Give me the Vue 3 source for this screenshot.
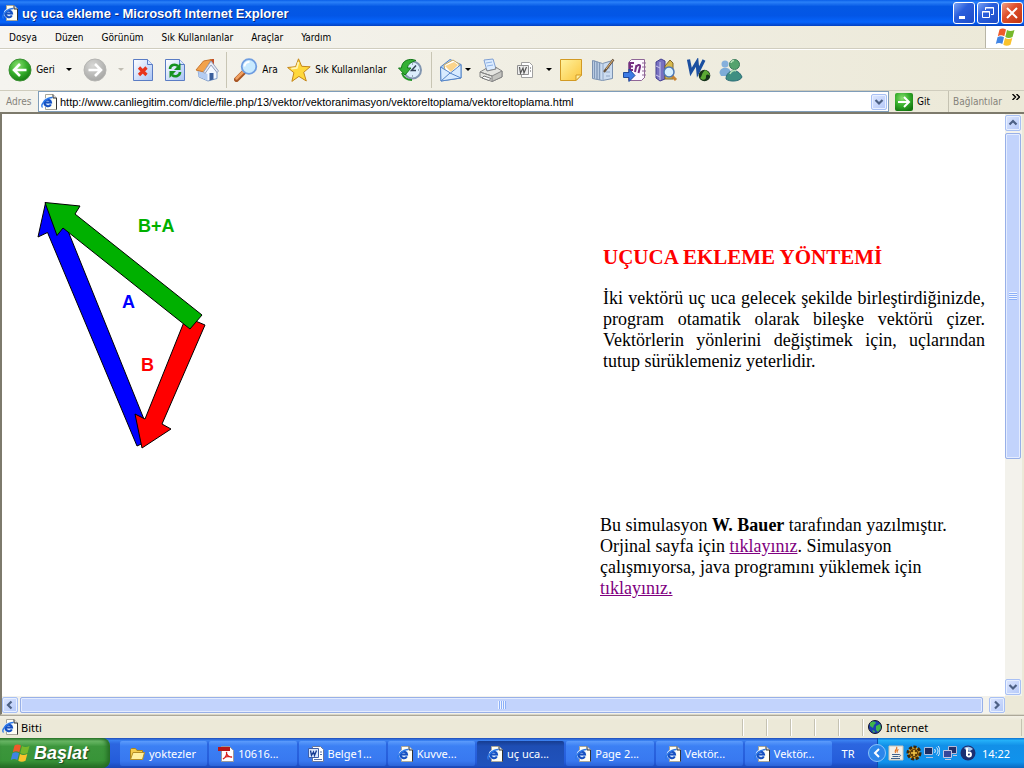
<template>
  <div class="screen">
    <!-- shared gradients and icons that are used more than once -->
    <svg class="defs" aria-hidden="true">
      <defs>
        <linearGradient id="sheet" x1="0" y1="0" x2="1" y2="1">
          <stop offset="0" stop-color="#fff" />
          <stop offset="1" stop-color="#a9c4f5" />
        </linearGradient>
        <radialGradient id="green" cx=".4" cy=".3" r=".75">
          <stop offset="0" stop-color="#8be070" />
          <stop offset=".55" stop-color="#35ad2b" />
          <stop offset="1" stop-color="#13780f" />
        </radialGradient>
        <radialGradient id="gray" cx=".4" cy=".3" r=".75">
          <stop offset="0" stop-color="#d8d8d6" />
          <stop offset="1" stop-color="#a4a4a2" />
        </radialGradient>
        <linearGradient id="note" x1="0" y1="0" x2="1" y2="1">
          <stop offset="0" stop-color="#fff3a0" />
          <stop offset="1" stop-color="#fbc53c" />
        </linearGradient>
        <symbol id="ie" viewBox="0 0 16 16">
          <path d="M4.500 .5h7.500l3.500 3.500v11.500h-11z" fill="#fffef4" stroke="#a8a69a" />
          <path d="M15.500 4v11.500M12 .5v3.500h3.500" fill="#ddd" stroke="#333" />
          <circle cx="6.500" cy="8.500" r="4.800" fill="#cfe4ff" />
          <path d="M10 8.500H3.500a3.300 3.300 0 0 1 6.500 0zM9.800 10.500a3.400 3.400 0 0 1-6.300-2" fill="none" stroke="#1650c0" stroke-width="2" />
          <path d="M1.500 13.500C-1 11 5 3.500 11.500 3.500" fill="none" stroke="#2c78e8" stroke-width="1.300" />
        </symbol>
        <symbol id="flag" viewBox="0 0 20 18">
          <path d="M4.500 1.500c2-1.500 4.200-1.500 6.500 0L9.300 8.300c-2-1.300-4.500-1.300-6.500 0z" fill="#ee5a2a" />
          <path d="M12 2c2.200 1.300 4.500 1.300 7.500 0L17.500 9c-2.500 1.300-5 1.300-7.200 0z" fill="#76b82c" />
          <path d="M2.500 9.300c2-1.300 4.200-1.300 6.500 0L7.300 16c-2-1.400-4.500-1.400-6.500 0z" fill="#3f84e4" />
          <path d="M10 10c2.200 1.300 4.700 1.300 7.300 0L15.500 16.700c-2.500 1.300-5 1.300-7.200 0z" fill="#f9c22c" />
        </symbol>
      </defs>
    </svg>

    <header class="title-bar">
      <svg class="icon16"><use href="#ie" /></svg>
      <h1>uç uca ekleme - Microsoft Internet Explorer</h1>
      <button class="caption" aria-label="Simge durumuna küçült">
        <svg viewBox="0 0 20 20"><path d="M5 14.500h6" stroke="#fff" stroke-width="3" /></svg>
      </button>
      <button class="caption" aria-label="Önceki boyut">
        <svg viewBox="0 0 20 20" fill="none" stroke="#fff">
          <path d="M7.500 7V4.500h8v7H13M7 5h9M4.500 8.500h7v6h-7zM4 9h8" />
        </svg>
      </button>
      <button class="caption close" aria-label="Kapat">
        <svg viewBox="0 0 20 20"><path d="M5 5l10 10M15 5L5 15" stroke="#fff" stroke-width="2" /></svg>
      </button>
    </header>

    <nav class="menu-bar">
      <button v-for="item in menus" :key="item">{{ item }}</button>
      <span class="brand"><svg viewBox="0 0 20 18"><use href="#flag" /></svg></span>
    </nav>

    <div class="tool-bar">
      <button class="tool back">
        <svg class="icon24" viewBox="0 0 24 24">
          <circle cx="12" cy="12" r="11" fill="url(#green)" stroke="#3c8f34" />
          <path d="M18.500 12H7M12 6l-6 6 6 6" fill="none" stroke="#fff" stroke-width="2.600" />
        </svg>
        Geri
      </button>
      <button class="drop" aria-label="Geri listesi"><i class="caret"></i></button>
      <button class="tool forward" aria-label="İleri" disabled>
        <svg class="icon24" viewBox="0 0 24 24">
          <circle cx="12" cy="12" r="11" fill="url(#gray)" stroke="#b5b5b2" />
          <path d="M5.500 12H17M12 6l6 6-6 6" fill="none" stroke="#fff" stroke-width="2.600" />
        </svg>
      </button>
      <button class="drop" aria-label="İleri listesi" disabled><i class="caret"></i></button>
      <button class="tool" aria-label="Durdur">
        <svg class="icon24" viewBox="0 0 24 24">
          <path d="M2.500 1.500h14l5 5v16h-19z" fill="url(#sheet)" stroke="#5a7cc4" />
          <path d="M16.500 1.500v5h5" fill="#dbe7ff" stroke="#5a7cc4" />
          <path d="M8 9.500l7.500 7.500M15.500 9.500L8 17" stroke="#e8341c" stroke-width="3.200" />
        </svg>
      </button>
      <button class="tool" aria-label="Yenile">
        <svg class="icon24" viewBox="0 0 24 24">
          <path d="M2.500 1.500h14l5 5v16h-19z" fill="url(#sheet)" stroke="#5a7cc4" />
          <path d="M16.500 1.500v5h5" fill="#dbe7ff" stroke="#5a7cc4" />
          <path d="M7 11c0-4 5-5.500 8-3" fill="none" stroke="#15921f" stroke-width="2.600" />
          <path d="M17.500 5v7h-6.500z" fill="#15921f" />
          <path d="M17 14c0 4-5 5.500-8 3" fill="none" stroke="#15921f" stroke-width="2.600" />
          <path d="M6.500 20v-7h6.500z" fill="#15921f" />
        </svg>
      </button>
      <button class="tool" aria-label="Giriş">
        <svg class="icon24" viewBox="0 0 24 24">
          <path d="M3 12l12-7 7 9v6.500l-9 2.500-9-4z" fill="#f4f8ff" stroke="#7d9bc9" />
          <path d="M3.500 12l9 4v6.500l-9-4z" fill="#b4ccf2" />
          <path d="M15 1h4v6h-4z" fill="#c4502c" />
          <path d="M1 12L8.500 3l8-1.500L9 14z" fill="#f2a24c" stroke="#c9762e" />
          <path d="M16 3L23.500 13l-1.500 1.500L16 7 10 15.500 8.500 14z" fill="#e8ebf4" stroke="#94a2c0" />
          <path d="M14.500 15h4v6.500l-4 1z" fill="#3b5f9c" />
        </svg>
      </button>
      <i class="rule"></i>
      <button class="tool search">
        <svg class="icon24" viewBox="0 0 24 24">
          <path d="M10 14L2.500 21.500" stroke="#a85624" stroke-width="5" stroke-linecap="round" />
          <path d="M9.500 13.500L2.500 20.500" stroke="#f0a060" stroke-width="2.500" stroke-linecap="round" />
          <circle cx="15" cy="8.500" r="7.300" fill="#c8eaff" stroke="#6f9de0" stroke-width="1.800" />
          <path d="M10.500 8.500a4.500 4.500 0 0 1 5-4.500" fill="none" stroke="#fff" stroke-width="2" />
        </svg>
        Ara
      </button>
      <button class="tool favorites">
        <svg class="icon24" viewBox="0 0 24 24">
          <path d="M11.500 .8l3.200 7.500 8.500.5-6.500 5.500 2.600 8.700-7.400-4.600-7 5 2-8.700L.6 9.500l8-.8z" fill="#ffd83c" stroke="#c4861c" />
          <path d="M11.500 4l-1.700 6-5.500.7" fill="none" stroke="#fff6b8" stroke-width="1.800" />
        </svg>
        Sık Kullanılanlar
      </button>
      <button class="tool history" aria-label="Geçmiş">
        <svg class="icon24" viewBox="0 0 24 24">
          <circle cx="14.500" cy="12" r="8.500" fill="#dceefc" stroke="#8296b0" stroke-width="2" />
          <path d="M14.500 5.500v1M21 12h-1M14.500 18.500v-1" stroke="#567" />
          <path d="M18 7.500L13.500 12.500H18" fill="none" stroke="#345" stroke-width="1.500" />
          <path d="M18 2.500C11-.5 3.500 3 3.500 10H.5l6.500 7 6-7H9.500c0-3.500 3.500-6 8.500-7.500z" fill="#35b035" stroke="#14781a" />
          <path d="M4 15c1.500 4.500 5.500 7 10 7" fill="none" stroke="#239428" stroke-width="2" />
        </svg>
      </button>
      <i class="rule"></i>
      <button class="tool mail" aria-label="Posta">
        <svg class="icon24" viewBox="0 0 24 24">
          <path d="M1.500 9L11 1.500l11 5V20l-20 3z" fill="#a9cdf8" stroke="#5585c8" />
          <path d="M5 7l9-5 6 4v9l-13 2z" fill="#fff" stroke="#c9a85c" />
          <path d="M6 8l9-4 4 3-7 7z" fill="#fbd48c" />
          <path d="M1.500 9l10 6L22 6.500V20l-20 3z" fill="#d8ebff" stroke="#5585c8" />
          <path d="M2 23l9-8 11 5" fill="none" stroke="#5585c8" />
        </svg>
        <i class="caret"></i>
      </button>
      <button class="tool print" aria-label="Yazdır">
        <svg class="icon24" viewBox="0 0 24 24">
          <path d="M5 2l9-1 3 10-9 2z" fill="#dcecff" stroke="#7fa0d4" />
          <path d="M7 5l6-1M8 8l6-1" stroke="#8fb2e4" />
          <path d="M1 14l6-3.500 1 2.500 9-2-.5-2L23 13v6l-10 4.500L1 19z" fill="#e4e4e0" stroke="#858585" />
          <path d="M1 14l12 4 10-5v6l-10 4.500V18z" fill="#c4c4c0" stroke="#858585" />
          <path d="M5 18l7 2.500-2 2L3 20z" fill="#fff" stroke="#777" />
        </svg>
      </button>
      <button class="tool word" aria-label="Word ile düzenle">
        <svg class="icon16" viewBox="0 0 16 16">
          <path d="M4.500 .5h8l3 3v12h-11z" fill="#fff" stroke="#a0a0a0" />
          <path d="M.5 3.500h11v9H.5z" fill="#eee" stroke="#909090" />
          <path d="M2.500 5l1 6L6 6l1 5 2.500-6M13 6h1M13 9h1" fill="none" stroke="#555" stroke-width="1.200" />
        </svg>
      </button>
      <button class="drop" aria-label="Düzenleyiciler"><i class="caret"></i></button>
      <button class="tool" aria-label="Not">
        <svg class="icon24" viewBox="0 0 24 24">
          <path d="M1.500 1.500h21V17L17 22.500H1.500z" fill="url(#note)" stroke="#d29a24" />
          <path d="M22.500 17H17v5.500z" fill="#fff1a4" stroke="#d29a24" />
        </svg>
      </button>
      <button class="tool" aria-label="Günlük">
        <svg class="icon24" viewBox="0 0 24 24">
          <path d="M1.500 2.500l10 3 10-3v18l-10 2-10-2z" fill="#cbdcf0" stroke="#7c92b0" />
          <path d="M3.500 2.500v18M6 3.500v18M8.500 4.500v17.500" stroke="#8199b9" stroke-width="1.500" />
          <path d="M12 6v16M15 10h4M15 14h4M15 18h4" stroke="#91a7c6" />
          <path d="M13 14L22.500 1.500" stroke="#66513a" stroke-width="2.200" />
          <path d="M15 11L22 2" stroke="#e2b878" />
        </svg>
      </button>
      <button class="tool" aria-label="OneNote">
        <svg class="icon24" viewBox="0 0 24 24">
          <path d="M5.500 4.500l3-3h13v18l-3 3h-13z" fill="#fdf8ff" stroke="#8f6697" />
          <path d="M21.500 2v18M19 5h4M19 9h4M19 13h4M19 17h4" stroke="#8f6697" />
          <path d="M11 5H7v7h3M7 8.500h3M12 14l1.500-7M12.700 10c1-3 5-4.500 4.300-1l-1.500 6" fill="none" stroke="#762d82" stroke-width="2" />
          <path d="M.5 14.500H6V11l6 6.500-6 6V19.500H.5z" fill="#3d7be4" stroke="#1d4a9c" />
        </svg>
      </button>
      <button class="tool" aria-label="Araştır">
        <svg class="icon24" viewBox="0 0 24 24">
          <path d="M1 4l5-3 4 2v18l-5 2-4-3z" fill="#7770c0" stroke="#443f91" />
          <path d="M5 4v18M1 8l4 2M1 17l4 2" stroke="#cac7ee" />
          <path d="M10 8l5-6 3 3v16h-8z" fill="#d8b94c" stroke="#80662a" />
          <path d="M16 17l5 5" stroke="#c78434" stroke-width="3" />
          <circle cx="14" cy="14" r="5" fill="#d7f0ff" stroke="#4e78b6" stroke-width="1.500" />
        </svg>
      </button>
      <button class="tool" aria-label="Web sözlük">
        <svg class="icon24" viewBox="0 0 24 24">
          <path d="M1.500 1.500L4 14l6-10 1 10 6-12" fill="none" stroke="#1b4fa0" stroke-width="3.200" />
          <circle cx="17.500" cy="17.500" r="5.800" fill="#16331a" />
          <path d="M13 20c2-1 1-4 5-8 3 1 5 4 5 6-2-2-4-2-4 1s-3 4-6 1z" fill="#5ca934" />
        </svg>
      </button>
      <button class="tool" aria-label="Messenger">
        <svg class="icon24" viewBox="0 0 24 24">
          <circle cx="6" cy="6" r="3.500" fill="#86b0dc" />
          <path d="M.5 15c0-6 9-7 11-2v5H2z" fill="#7eacd8" />
          <circle cx="15.500" cy="6.500" r="5" fill="#55a36d" stroke="#39795a" />
          <path d="M7 21c0-9 12-12 16-2-2 5-13 5-16 2z" fill="#3e8f82" stroke="#2c6c78" />
          <path d="M12 5a3 3 0 0 1 3-2.500M11 16c1-3 4-4 6-3" fill="none" stroke="#b4e0b6" stroke-width="1.500" />
        </svg>
      </button>
    </div>

    <form class="address-bar" @submit.prevent>
      <label for="address">Adres</label>
      <div class="combo">
        <svg class="icon16"><use href="#ie" /></svg>
        <input id="address" v-model="address" type="text" spellcheck="false" />
        <button type="button" class="scroll-button" aria-label="Adres listesi">
          <svg viewBox="0 0 16 16"><path d="M4.500 6L8 9.500 11.500 6" /></svg>
        </button>
      </div>
      <button class="go" type="submit">
        <svg viewBox="0 0 18 18">
          <path d="M0 0h18v18H0z" fill="url(#green)" />
          <path d="M3 9h10M9 4l5 5-5 5" fill="none" stroke="#fff" stroke-width="2" />
        </svg>
        Git
      </button>
      <span class="links">Bağlantılar</span>
      <button class="more" type="button" aria-label="Diğer bağlantılar">
        <svg viewBox="0 0 8 6"><path d="M.5 0l3 3-3 3M4.500 0l3 3-3 3" fill="none" stroke="#000" stroke-width="1.400" /></svg>
      </button>
    </form>

    <div class="view">
      <main class="page">
        <svg class="vectors" viewBox="20 190 220 270" role="img" aria-label="A, B ve B+A vektörleri">
          <g stroke="#000">
            <polygon points="45.500,203 38,237 47.500,232.500 137,446 152,439 66,226 76,222" fill="#00f" />
            <polygon points="142,448 135,414 145,419 186,317 205,325 162,424 171,429" fill="#f00" />
            <polygon points="45,202.500 80,206 75,214 202,315 190,329 63,228 57,235.500" fill="#00b000" />
          </g>
          <text x="138" y="232" fill="#00b000">B+A</text>
          <text x="122" y="308" fill="#00f">A</text>
          <text x="141" y="371" fill="#f00">B</text>
        </svg>
        <article>
          <section class="method">
            <h2>UÇUCA EKLEME YÖNTEMİ</h2>
            <p>
              İki vektörü uç uca gelecek şekilde birleştirdiğinizde, program otamatik olarak bileşke
              vektörü çizer. Vektörlerin yönlerini değiştimek için, uçlarından tutup sürüklemeniz
              yeterlidir.
            </p>
          </section>
          <p class="credit">
            Bu simulasyon <b>W. Bauer</b> tarafından yazılmıştır. Orjinal sayfa için
            <a href="#">tıklayınız</a>. Simulasyon çalışmıyorsa, java programını yüklemek için
            <a href="#">tıklayınız.</a>
          </p>
        </article>
      </main>
      <div class="scroll vertical">
        <button class="scroll-button" aria-label="Yukarı">
          <svg viewBox="0 0 16 16"><path d="M4.500 9.500L8 6l3.500 3.500" /></svg>
        </button>
        <div class="track"><div class="thumb"><i class="grip"></i></div></div>
        <button class="scroll-button" aria-label="Aşağı">
          <svg viewBox="0 0 16 16"><path d="M4.500 6L8 9.500 11.500 6" /></svg>
        </button>
      </div>
      <div class="scroll horizontal">
        <button class="scroll-button" aria-label="Sola">
          <svg viewBox="0 0 16 16"><path d="M9.500 4.500L6 8l3.500 3.500" /></svg>
        </button>
        <div class="track"><div class="thumb"><i class="grip"></i></div></div>
        <button class="scroll-button" aria-label="Sağa">
          <svg viewBox="0 0 16 16"><path d="M6 4.500L9.500 8 6 11.500" /></svg>
        </button>
      </div>
    </div>

    <div class="status-bar">
      <svg class="icon16"><use href="#ie" /></svg>
      <span class="message">Bitti</span>
      <i v-for="n in 5" :key="n" class="cell"></i>
      <span class="zone">
        <svg viewBox="0 0 14 14">
          <circle cx="7" cy="7" r="6.500" fill="#1b3fb0" stroke="#112" />
          <path d="M2 3c2-2 5-2 6 0L6 5 5 8 2 6zM8 6l4-2 1 4-3 4-2-2zM4 10l3 1-1 2z" fill="#3fb54a" />
        </svg>
        Internet
      </span>
    </div>

    <footer class="task-bar">
      <button class="start"><svg viewBox="0 0 20 18"><use href="#flag" /></svg>Başlat</button>
      <div class="tasks">
        <button v-for="(task, index) in tasks" :key="index" :class="{ active: task.active }">
          <svg v-if="task.icon === 'folder'" class="icon16" viewBox="0 0 16 16">
            <path d="M1.500 13.500v-10l1-1h4l1.500 2h5.500v9z" fill="#f3cb4c" stroke="#a9831d" />
            <path d="M1.500 13.500L4 6.500h11.500l-2 7z" fill="#fff0a0" stroke="#b48e26" />
          </svg>
          <svg v-else-if="task.icon === 'pdf'" class="icon16" viewBox="0 0 16 16">
            <path d="M3.500 .5h8l4 4v11h-12z" fill="#fff" stroke="#999" />
            <path d="M0 1h12v4H0z" fill="#b81818" />
            <path d="M5 13c3-2 4-5 3.500-7C8 9 11 11.500 14 11 11 10 7 11 5 13z" fill="none" stroke="#d8201c" stroke-width="1.300" />
          </svg>
          <svg v-else-if="task.icon === 'word'" class="icon16" viewBox="0 0 16 16">
            <path d="M4.500 .5h8l3 3v12h-11z" fill="#fff" stroke="#68789a" />
            <path d="M12 6h2M12 8.500h2M6 13.500h8" stroke="#5571ab" />
            <path d="M.5 2.500h10v9H.5z" fill="#d8e6ff" stroke="#3c5ea8" />
            <path d="M2.500 4.500l1 5L5.500 6l1 3.500 2-5" fill="none" stroke="#173c92" stroke-width="1.300" />
          </svg>
          <svg v-else class="icon16"><use href="#ie" /></svg>
          {{ task.title }}
        </button>
      </div>
      <span class="language">TR</span>
      <div class="tray">
        <button class="expand" aria-label="Gizli simgeleri göster">
          <svg viewBox="0 0 18 18">
            <circle cx="9" cy="9" r="8.500" fill="#2c86ea" stroke="#8cc4fa" />
            <path d="M11 5L7 9l4 4" fill="none" stroke="#fff" stroke-width="2" />
          </svg>
        </button>
        <svg class="icon16" viewBox="0 0 16 16">
          <path d="M1 1h14v14H1z" fill="#f2f0ea" stroke="#c9c4b6" />
          <path d="M8.500 2c2 2-3 3-1 6M10.500 4.500c-1.500 1-2 1.500-1 3" fill="none" stroke="#e0701c" stroke-width="1.200" />
          <path d="M4 9.500h7M4.500 11.500h6M3 13.500h9M11 9.500c2 0 2 2 0 2" fill="none" stroke="#3c618d" />
        </svg>
        <svg class="icon16" viewBox="0 0 16 16">
          <circle cx="8" cy="8" r="6" fill="#e8a828" stroke="#3b2808" stroke-width="3" stroke-dasharray="3 1.500" />
          <circle cx="8" cy="8" r="4" fill="#5c3c08" />
          <path d="M8 5v6M5 8h6" stroke="#f8c848" stroke-width="1.500" />
        </svg>
        <svg class="icon16" viewBox="0 0 16 16">
          <path d="M.5 2.500h8v7h-8zM2 12.500h7" fill="#1c2c60" stroke="#aebfdf" />
          <path d="M10.500 4c1 1 1 3 0 4M12.500 2.500c2 2 2 5 0 7M14 1c2.500 3 2.500 7 0 10" fill="none" stroke="#e8f2ff" />
        </svg>
        <svg class="icon16" viewBox="0 0 16 16">
          <path d="M6.500 1.500h8v7h-8z" fill="#22306a" stroke="#b3b9d7" />
          <path d="M1.500 5.500h8v7h-8zM3 14.500h6M11 10.500h4" fill="#35479a" stroke="#c2c7e2" />
        </svg>
        <svg class="icon16" viewBox="0 0 16 16">
          <circle cx="8" cy="8" r="7.500" fill="#1b2f72" />
          <path d="M4 3a7 7 0 0 1 9 1l-3 2-4-1z" fill="#a9c9ee" />
          <path d="M7 3v8M7 9a2 2 0 1 1 2 2.500A2 2 0 0 1 7 9" fill="none" stroke="#fff" stroke-width="2" />
        </svg>
        <time>14:22</time>
      </div>
    </footer>
  </div>
</template>

<script setup>
import { ref } from "vue";

const menus = ["Dosya", "Düzen", "Görünüm", "Sık Kullanılanlar", "Araçlar", "Yardım"];

const address = ref(
  "http://www.canliegitim.com/dicle/file.php/13/vektor/vektoranimasyon/vektoreltoplama/vektoreltoplama.html"
);

const tasks = ref([
  { title: "yoktezler", icon: "folder" },
  { title: "10616...", icon: "pdf" },
  { title: "Belge1...", icon: "word" },
  { title: "Kuvve...", icon: "ie" },
  { title: "uç uca...", icon: "ie", active: true },
  { title: "Page 2...", icon: "ie" },
  { title: "Vektör...", icon: "ie" },
  { title: "Vektör...", icon: "ie" },
]);
</script>

<style>
body {
  margin: 0;
}
</style>

<style scoped>
.screen {
  display: flex;
  flex-direction: column;
  height: 100vh;
  overflow: hidden;
  background: #ece9d8;
  color: #000;
  font-family: "Noto Sans", sans-serif;
  font-size: 11px;
}

.defs {
  position: absolute;
  width: 0;
  height: 0;
}

button {
  display: flex;
  align-items: center;
  padding: 0;
  border: 0;
  background: none;
  color: inherit;
  font: inherit;
  white-space: nowrap;
}

svg {
  display: block;
  flex: none;
}

.icon16 {
  width: 16px;
  height: 16px;
}

.icon24 {
  width: 24px;
  height: 24px;
}

/* ---- title bar ---- */
.title-bar {
  display: flex;
  flex: none;
  align-items: center;
  gap: 2px;
  height: 26px;
  padding: 0 1px 0 2px;
  background: linear-gradient(#0a5fe8, #2a80f8 8%, #0458e4 25%, #0356e6 60%, #0664fc 85%, #0340c0);
}

.title-bar h1 {
  flex: 1;
  margin: 0 0 0 2px;
  color: #fff;
  font-family: "Liberation Sans", sans-serif;
  font-size: 13px;
  font-weight: bold;
  text-shadow: 1px 1px #0a2a80;
}

.caption {
  box-sizing: border-box;
  width: 22px;
  height: 22px;
  border: 1px solid #fff;
  border-radius: 3px;
  background: linear-gradient(135deg, #7ba4f4, #2a5fdc 40%, #1d4cc8);
}

.caption.close {
  background: linear-gradient(135deg, #f0a088, #e0502c 40%, #c03410);
}

.caption svg {
  width: 20px;
  height: 20px;
}

/* ---- menu ---- */
.menu-bar,
.tool-bar,
.address-bar {
  display: flex;
  flex: none;
  align-items: center;
  box-sizing: border-box;
  font-family: "DejaVu Sans Condensed", sans-serif;
  font-size: 10px;
}

.menu-bar {
  align-items: stretch;
  height: 22px;
  background: linear-gradient(90deg, #f6f5f2, #ece9d8);
}

.menu-bar button {
  padding: 0 9px;
}

.brand {
  display: flex;
  align-items: center;
  justify-content: center;
  width: 38px;
  margin-left: auto;
  border-left: 1px solid #b8b5a6;
  background: #fff;
}

.brand svg {
  width: 20px;
  height: 18px;
}

/* ---- toolbar ---- */
.tool-bar {
  height: 42px;
  border-top: 1px solid #d0cdbf;
  background: linear-gradient(90deg, #f5f4ef, #ece9d8);
  box-shadow: inset 0 1px #fff;
}

.tool {
  justify-content: center;
  gap: 4px;
  width: 32px;
}

.tool.back {
  width: 63px;
}

.tool.forward {
  width: 40px;
}

.tool.search {
  width: 52px;
}

.tool.favorites {
  width: 110px;
}

.tool.history {
  width: 36px;
}

.tool.mail {
  gap: 2px;
  width: 40px;
}

.tool.word {
  width: 36px;
}

.drop {
  width: 12px;
  justify-content: center;
}

.caret {
  border: 3px solid transparent;
  border-top-color: #000;
  border-bottom: 0;
}

.drop:disabled .caret {
  border-top-color: #c0beb4;
}

.rule {
  width: 1px;
  height: 36px;
  margin: 0 3px;
  background: #c8c5b4;
}

/* ---- address ---- */
.address-bar {
  height: 22px;
  padding: 0 4px 0 6px;
  border-top: 1px solid #cfccbd;
  background: linear-gradient(90deg, #f3f2ec, #ece9d8);
}

.address-bar label {
  width: 32px;
  color: #85837a;
}

.combo {
  display: flex;
  flex: 1;
  align-items: center;
  box-sizing: border-box;
  height: 21px;
  padding: 0 1px 0 2px;
  border: 1px solid #7f9db9;
  background: #fff;
}

.combo input {
  flex: 1;
  min-width: 0;
  padding: 0 3px;
  border: 0;
  outline: 0;
  background: none;
  color: #000;
  font-family: "Liberation Sans", sans-serif;
  font-size: 11px;
}

.go {
  gap: 4px;
  width: 53px;
  margin-left: 6px;
}

.go svg {
  width: 18px;
  height: 18px;
  border-radius: 2px;
}

.links {
  display: flex;
  align-items: center;
  align-self: stretch;
  width: 59px;
  padding-left: 4px;
  border-left: 1px solid #c5c2b2;
  color: #85837a;
}

.more {
  align-self: flex-start;
  margin-top: 3px;
}

.more svg {
  width: 8px;
  height: 6px;
}

/* ---- page area ---- */
.view {
  display: grid;
  flex: 1;
  grid-template-columns: 1fr 17px;
  grid-template-rows: 1fr 18px;
  min-height: 0;
  padding: 0 2px 0 0;
  border: solid #7d7a6c;
  border-width: 2px 0 1px 2px;
  border-bottom-color: #d8d5c6;
}

.page {
  display: flex;
  justify-content: space-between;
  overflow: hidden;
  padding: 76px 20px 0 18px;
  background: #fff;
  font-family: "Liberation Serif", serif;
  font-size: 18px;
  line-height: 21px;
}

.vectors {
  width: 220px;
  height: 270px;
}

.vectors text {
  font-family: "Liberation Sans", sans-serif;
  font-size: 18px;
  font-weight: bold;
}

article {
  width: 385px;
  padding-top: 57px;
}

.method {
  padding-left: 3px;
}

.method h2 {
  margin: 0 0 20px;
  color: #f00;
  font-size: 21px;
  line-height: 21px;
}

.method p {
  margin: 0;
  text-align: justify;
}

.credit {
  margin: 143px 16px 0 0;
}

.credit a {
  color: #800080;
}

.scroll {
  display: flex;
  gap: 2px;
  padding: 1px 0;
  background: #f3f2ec;
}

.vertical {
  flex-direction: column;
}

.scroll-button {
  flex: none;
  justify-content: center;
  box-sizing: border-box;
  width: 16px;
  height: 16px;
  border: 1px solid #a8c0f4;
  border-radius: 2px;
  background: linear-gradient(135deg, #dce6ff, #b4c8f8);
  box-shadow: inset 0 0 0 1px #e8f0ff;
}

.scroll-button svg {
  width: 16px;
  height: 16px;
}

.scroll-button path {
  fill: none;
  stroke: #4d6185;
  stroke-width: 2.200;
}

.track {
  display: flex;
  flex: 1;
  min-height: 0;
}

.vertical .track {
  flex-direction: column;
}

.thumb {
  display: flex;
  align-items: center;
  justify-content: center;
  box-sizing: border-box;
  border: 1px solid #98b0e8;
  border-radius: 2px;
  background: #c2d3fc;
  box-shadow: inset 0 0 0 1px #e4ecff;
}

.vertical .thumb {
  width: 16px;
  height: 60%;
}

.horizontal .thumb {
  flex: 1;
  height: 16px;
  margin-right: 4px;
}

.grip {
  width: 8px;
  height: 8px;
  background: repeating-linear-gradient(#eef4ff 0 1px, #8cb0f8 1px 2px);
}

.horizontal .grip {
  background: repeating-linear-gradient(90deg, #eef4ff 0 1px, #8cb0f8 1px 2px);
}

/* ---- status bar ---- */
.status-bar {
  display: flex;
  flex: none;
  align-items: center;
  height: 22px;
  padding: 0 2px;
  border-top: 1px solid #aca899;
  background: linear-gradient(#f2f0e6, #ece9d8 20%);
}

.message {
  flex: 1;
  padding-left: 3px;
}

.cell,
.zone {
  box-sizing: border-box;
  width: 24px;
  height: 17px;
  border-left: 1px solid #c5c2b2;
  box-shadow: inset 1px 0 #fff;
}

.zone {
  display: flex;
  align-items: center;
  gap: 4px;
  width: 160px;
  padding-left: 5px;
  border-right: 1px solid #c5c2b2;
}

.zone svg {
  width: 14px;
  height: 14px;
}

/* ---- task bar ---- */
.task-bar {
  display: flex;
  flex: none;
  height: 30px;
  background: linear-gradient(#1f4cb8, #3a80f0 8%, #2c66e0 20%, #245cda 80%, #1a46b4);
  color: #fff;
}

.start {
  gap: 4px;
  width: 110px;
  padding-left: 10px;
  border-radius: 0 8px 8px 0;
  background: linear-gradient(#2c7a2c, #6cba68 10%, #3c963c 28%, #389438 75%, #256c25);
  box-shadow: inset -3px 0 4px #256c25;
  font-family: "Liberation Sans", sans-serif;
  font-size: 18px;
  font-style: italic;
  font-weight: bold;
  text-shadow: 1px 1px 1px #1c4a1c;
}

.start svg {
  width: 20px;
  height: 18px;
}

.tasks {
  display: grid;
  flex: 1;
  grid-template-columns: repeat(8, 1fr);
  gap: 2px;
  padding: 3px 0 2px 10px;
}

.tasks button {
  gap: 4px;
  overflow: hidden;
  padding-left: 9px;
  border-radius: 2px;
  background: linear-gradient(#5c9cfc, #3c80f4 20%, #3878f0 80%, #2c64d8);
}

.tasks button.active {
  padding-left: 10px;
  background: linear-gradient(#163c90, #1e4eb4 20%, #2052bc);
}

.language {
  display: flex;
  align-items: center;
  justify-content: center;
  width: 32px;
}

.tray {
  display: flex;
  align-items: center;
  gap: 2px;
  width: 146px;
  margin-left: 13px;
  border-left: 1px solid #0c4cb0;
  background: linear-gradient(#0c70d0, #24b0f8 8%, #1290e8 25%, #1092ec 80%, #0a68c0);
}

.expand {
  margin-left: -10px;
}

.expand svg {
  width: 18px;
  height: 18px;
}

.tray time {
  margin-left: auto;
  padding-right: 14px;
}
</style>
